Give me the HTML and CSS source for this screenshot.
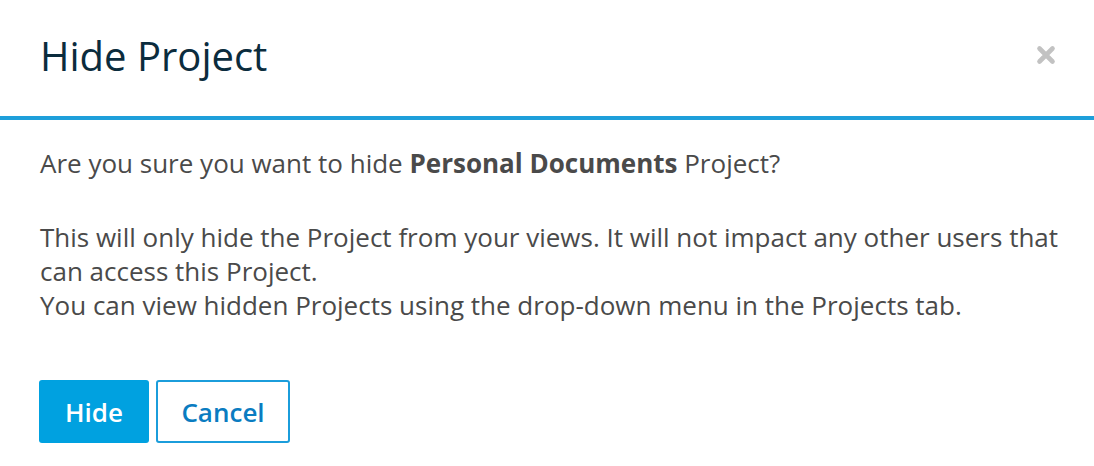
FILE: index.html
```html
<!DOCTYPE html>
<html>

<head>
    <meta charset="UTF-8" />
    <title>Hide Project</title>
    <link rel="stylesheet" href="styles.css">
</head>

<body>
    <div class="modal">
        <div class="modal-header">
            <h1>Hide Project</h1>
            <button class="close" aria-label="Close">
                <svg width="20" height="20" viewBox="0 0 20 20">
                    <path d="M3.5 3.5 L16.5 16.5 M16.5 3.5 L3.5 16.5" stroke="currentColor" stroke-width="4.6" stroke-linecap="round" />
                </svg>
            </button>
        </div>

        <div class="modal-body">
            <p>Are you sure you want to hide <strong>Personal Documents</strong> Project?</p>
            <p>This will only hide the Project from your views. It will not impact any other users that can access this Project.<br>
            You can view hidden Projects using the drop-down menu in the Projects tab.</p>
        </div>

        <div class="modal-footer">
            <button class="btn btn-primary">Hide</button>
            <button class="btn btn-outline">Cancel</button>
        </div>
    </div>
</body>

</html>
```

FILE: styles.css
```css
body {
    margin: 0;
    font-family: "Open Sans", sans-serif;
    background: white;
}

.modal {
    width: 1094px;
}

.modal-header {
    display: flex;
    align-items: center;
    justify-content: space-between;
    height: 120px;
    padding: 0 38px 0 40px;
    box-sizing: border-box;
    border-bottom: 4px solid #1e9fda;
}

.modal-header h1 {
    margin: -6px 0 0 0;
    font-size: 40px;
    font-weight: 400;
    color: #0b2c3d;
}

.close {
    border: none;
    background: none;
    padding: 0;
    color: #c2c2c2;
    display: flex;
    margin-top: -6px;
}

.modal-body {
    padding: 26px 30px 0 40px;
    color: #4a4a4a;
    font-size: 26px;
    line-height: 34px;
}

.modal-body p {
    margin: 0 0 40px 0;
}

.modal-body strong {
    font-weight: 700;
}

.modal-footer {
    display: flex;
    gap: 7px;
    padding: 18px 39px;
}

.btn {
    font-family: "Open Sans", sans-serif;
    font-size: 26px;
    font-weight: 600;
    height: 63px;
    border-radius: 3px;
    cursor: pointer;
}

.btn-primary {
    width: 110px;
    background: #00a1e0;
    color: white;
    border: none;
}

.btn-outline {
    width: 134px;
    background: white;
    color: #0a7cc1;
    border: 2px solid #1b9ddb;
}
```
